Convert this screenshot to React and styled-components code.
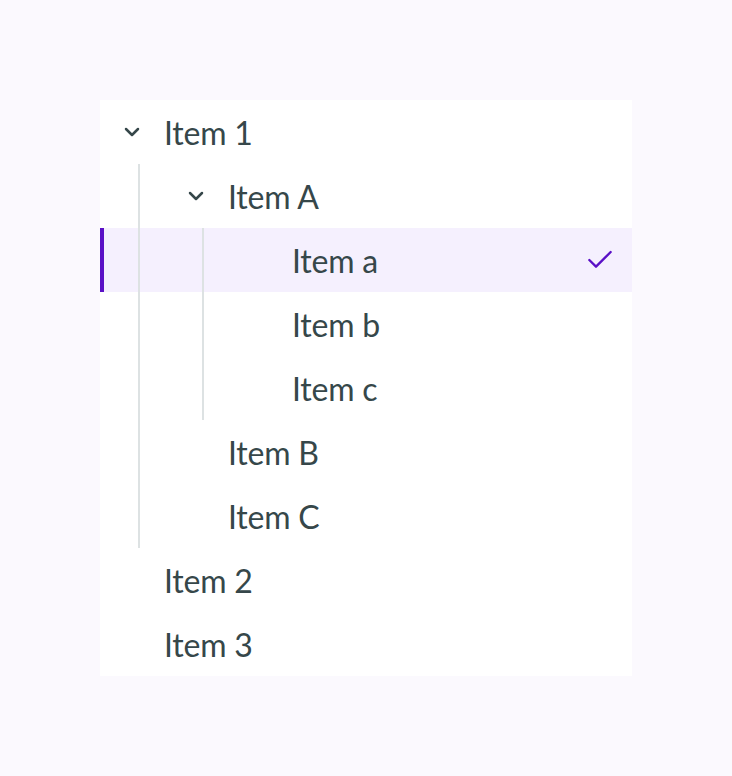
import React from "react";
import styled, { createGlobalStyle } from "styled-components";
import { ChevronDown, Check } from "lucide-react";

const Global = createGlobalStyle`
  html, body { margin: 0; padding: 0; background: #fbf9fe; }
  body { font-family: "Lato", "Open Sans", sans-serif; }
`;

const Page = styled.div`
  width: 732px;
  height: 776px;
  padding: 100px;
  box-sizing: border-box;
`;

const Panel = styled.ul`
  list-style: none;
  margin: 0;
  padding: 0;
  width: 532px;
  background: #ffffff;
`;

const Row = styled.li`
  display: flex;
  align-items: stretch;
  height: 64px;
  background: ${(p) => (p.$selected ? "#f5f0fe" : "transparent")};
  box-shadow: ${(p) => (p.$selected ? "inset 4px 0 0 #5a10c6" : "none")};
`;

const Guide = styled.span`
  flex: 0 0 64px;
  display: flex;
  &::before {
    content: "";
    margin-left: 38px;
    width: 2px;
    background: ${(p) => (p.$on ? "#dde2e3" : "transparent")};
  }
`;

const Toggle = styled.span`
  flex: 0 0 64px;
  display: flex;
  align-items: center;
  padding-left: 20px;
  box-sizing: border-box;
  color: #36474a;
`;

const Label = styled.span`
  flex: 1;
  display: flex;
  align-items: center;
  font-size: 32px;
  letter-spacing: -0.2px;
  color: #36474a;
`;

const Mark = styled.span`
  display: flex;
  align-items: center;
  padding-right: 16px;
  color: #5a10c6;
`;

const rows = [
  { label: "Item 1", depth: 0, open: true, guides: [] },
  { label: "Item A", depth: 1, open: true, guides: [true] },
  { label: "Item a", depth: 2, guides: [true, true], selected: true },
  { label: "Item b", depth: 2, guides: [true, true] },
  { label: "Item c", depth: 2, guides: [true, true] },
  { label: "Item B", depth: 1, guides: [true] },
  { label: "Item C", depth: 1, guides: [true] },
  { label: "Item 2", depth: 0, guides: [] },
  { label: "Item 3", depth: 0, guides: [] },
];

export default function App() {
  return (
    <Page>
      <Global />
      <Panel>
        {rows.map((r) => (
          <Row key={r.label} $selected={r.selected}>
            {r.guides.map((g, i) => (
              <Guide key={i} $on={g} />
            ))}
            <Toggle>{r.open && <ChevronDown size={24} strokeWidth={2.5} />}</Toggle>
            <Label>{r.label}</Label>
            {r.selected && (
              <Mark>
                <Check size={32} strokeWidth={1.75} />
              </Mark>
            )}
          </Row>
        ))}
      </Panel>
    </Page>
  );
}
